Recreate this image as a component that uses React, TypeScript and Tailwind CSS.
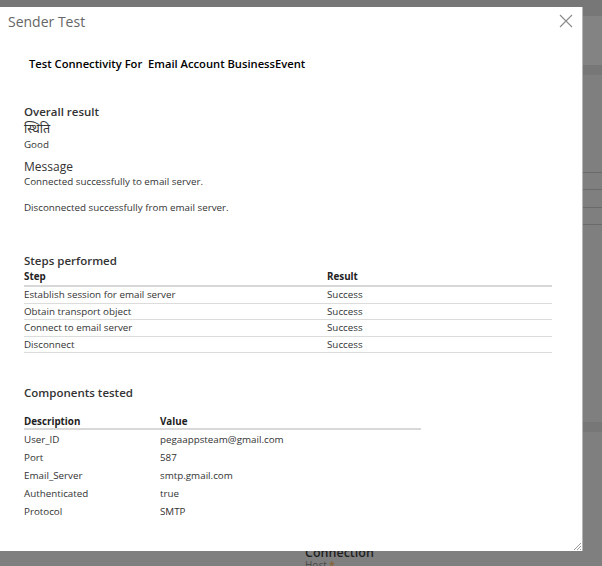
import React from 'react'

const steps = [
  'Establish session for email server',
  'Obtain transport object',
  'Connect to email server',
  'Disconnect',
]

const components: [string, string][] = [
  ['User_ID', 'pegaappsteam@gmail.com'],
  ['Port', '587'],
  ['Email_Server', 'smtp.gmail.com'],
  ['Authenticated', 'true'],
  ['Protocol', 'SMTP'],
]

function Backdrop() {
  // page behind the modal, dimmed
  return (
    <div className="absolute inset-0 bg-[#7f7f7f]">
      <div className="h-[16px] bg-[#777777]" />
      <div className="h-[49px] bg-[#838383]" />
      <div className="h-[10px] bg-[#777777]" />
      <div className="h-[97px]" />
      <div className="h-[17px] border-t border-[#6a6a6a]" />
      <div className="h-[18px] border-t border-[#6a6a6a]" />
      <div className="h-[17px] border-t border-[#6a6a6a]" />
      <div className="h-[198px] border-t border-[#6a6a6a]" />
      <div className="h-[10px] bg-[#777777]" />
      <div className="flex flex-col pl-[305px] pt-[114px]">
        <span className="text-[12.5px] font-semibold leading-[13px] text-[#1f1f1f]">Connection</span>
        <span className="text-[10px] leading-[12px] text-[#4a4a4a]">
          Host <span className="text-[#8a5a1a]">*</span>
        </span>
      </div>
    </div>
  )
}

export default function App() {
  return (
    <div
      className="relative h-[566px] w-[602px] overflow-hidden"
      style={{ fontFamily: '"Open Sans", "Noto Sans", sans-serif' }}
    >
      <Backdrop />

      {/* Modal */}
      <div className="absolute left-0 top-[7px] flex h-[544px] w-[583px] flex-col border-r border-[#b5b5b5] bg-white text-[#333333]">
        <div className="flex items-start justify-between pl-[8px] pr-[9px] pt-[5px]">
          <h2 className="text-[14px] leading-[20px] text-[#666666]">Sender Test</h2>
          <svg width="14" height="14" viewBox="0 0 14 14" className="mt-[2px]" fill="none" stroke="#8a8a8a" strokeWidth="1.1">
            <path d="M1 1 L13 13 M13 1 L1 13" />
          </svg>
        </div>

        <div className="px-[24px]">
          <h1 className="ml-[5px] mt-[24px] text-[11.2px] font-semibold leading-[16px] text-black">
            Test Connectivity For&nbsp; Email Account BusinessEvent
          </h1>

          {/* Overall result */}
          <div className="mt-[32px] flex flex-col">
            <h3 className="text-[11.5px] font-semibold leading-[15px]">Overall result</h3>
            <span className="text-[12.5px] leading-[19px]" style={{ fontFamily: '"Noto Sans", "Open Sans", sans-serif' }}>
              स्थिति
            </span>
            <span className="text-[9.8px] leading-[14px]">Good</span>

            <h3 className="mt-[6px] text-[12px] leading-[17px]">Message</h3>
            <p className="text-[9.8px] leading-[14px]">Connected successfully to email server.</p>
            <p className="mt-[12px] text-[9.8px] leading-[14px]">Disconnected successfully from email server.</p>
          </div>

          {/* Steps performed */}
          <div className="mt-[37px] w-[528px]">
            <h3 className="text-[11.5px] font-semibold leading-[17px]">Steps performed</h3>
            <div className="mt-[1px] grid grid-cols-[303px_1fr] border-b-2 border-[#d8d8d8] pb-[2px] text-[9.8px] font-bold leading-[13px] text-[#222222]">
              <span>Step</span>
              <span>Result</span>
            </div>
            {steps.map((s) => (
              <div
                key={s}
                className="grid h-[16.5px] grid-cols-[303px_1fr] items-center border-b border-[#dcdcdc] text-[9.8px] leading-[13px]"
              >
                <span>{s}</span>
                <span>Success</span>
              </div>
            ))}
          </div>

          {/* Components tested */}
          <div className="mt-[31px] w-[397px]">
            <h3 className="text-[11.5px] font-semibold leading-[17px]">Components tested</h3>
            <div className="mt-[14px] grid grid-cols-[136px_1fr] border-b-2 border-[#d8d8d8] text-[9.8px] font-bold leading-[13px] text-[#222222]">
              <span>Description</span>
              <span>Value</span>
            </div>
            <div>
              {components.map(([k, v]) => (
                <div key={k} className="grid h-[18px] grid-cols-[136px_1fr] items-center text-[9.8px] leading-[13px]">
                  <span>{k}</span>
                  <span>{v}</span>
                </div>
              ))}
            </div>
          </div>
        </div>

        {/* resize grip */}
        <svg width="8" height="8" viewBox="0 0 8 8" className="absolute bottom-[1px] right-[1px]" stroke="#9a9a9a" strokeWidth="1">
          <path d="M8 1 L1 8 M8 4 L4 8 M8 7 L7 8" />
        </svg>
      </div>
    </div>
  )
}
